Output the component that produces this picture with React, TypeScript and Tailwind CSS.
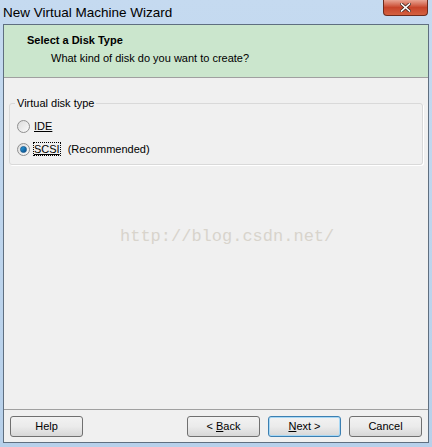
import React from 'react';

const body = { fontFamily: '"Liberation Sans", Arial, sans-serif' };

// Win7-style radio button
const Radio = ({ checked, u, rest }: { checked?: boolean; u: string; rest?: string }) => (
  <div className="flex items-center h-[13px]">
    <span className="relative w-[13px] h-[13px] rounded-full border border-[#8f8f8f] bg-gradient-to-br from-[#dcdcdc] to-[#fafafa] flex items-center justify-center">
      {checked && (
        <span className="w-[7px] h-[7px] rounded-full bg-gradient-to-br from-[#2aa6e8] to-[#0a4a86] border border-[#185a90]" />
      )}
    </span>
    <span className="ml-[4px] text-[11px] text-black">
      <span className={checked ? 'underline outline-1 outline-dotted outline-black' : 'underline'}>{u}</span>
      {rest && <span className="ml-[8px]">{rest}</span>}
    </span>
  </div>
);

const Btn = ({ children, focus }: { children: React.ReactNode; focus?: boolean }) => (
  <button
    className={`w-[73px] h-[21px] rounded-[3px] border text-[11px] text-black bg-gradient-to-b from-[#f2f2f2] via-[#ebebeb] to-[#d7d7d7] ${
      focus ? 'border-[#3c7fb1] shadow-[inset_0_0_0_1px_#a8d8f5]' : 'border-[#707070]'
    }`}
  >
    {children}
  </button>
);

export default function App() {
  return (
    <div className="w-[432px] h-[447px] bg-gradient-to-b from-[#c5daf0] to-[#b7d0ea] flex flex-col" style={body}>
      {/* title bar */}
      <div className="h-[24px] flex items-start justify-between">
        <span className="pl-[3px] pt-[3px] text-[13.5px] text-black">New Virtual Machine Wizard</span>
        <div className="mr-[4px] w-[45px] h-[16px] rounded-b-[4px] border border-t-0 border-[#6d2b1d] bg-gradient-to-b from-[#e8a493] via-[#c7442a] to-[#d4603f] flex items-center justify-center">
          <svg width="11" height="9" viewBox="0 0 11 9">
            <path d="M1.5 1 L9.5 8 M9.5 1 L1.5 8" stroke="#4a2a22" strokeWidth="3.2" strokeLinecap="square" />
            <path d="M1.5 1 L9.5 8 M9.5 1 L1.5 8" stroke="#ffffff" strokeWidth="1.6" strokeLinecap="square" />
          </svg>
        </div>
      </div>

      {/* client area */}
      <div className="flex-1 mx-[3px] mb-[4px] border border-[#5f6f80] bg-[#f0f0f0] flex flex-col">
        <div className="h-[53px] bg-[#cbe6cd] border-b border-[#a0a0a0] pl-[23px] pt-[7px]">
          <div className="text-[11px] font-bold text-black">Select a Disk Type</div>
          <div className="text-[11px] text-black pl-[24px] mt-[1px]">What kind of disk do you want to create?</div>
        </div>

        <div className="flex-1 px-[5px] pt-[17px] relative">
          <fieldset className="border border-[#d9d9d9] shadow-[1px_1px_0_#ffffff] rounded-[3px] h-[70px] px-[7px] pt-[4px]">
            <legend className="text-[11px] text-black px-[2px] -ml-[2px]">Virtual disk type</legend>
            <div className="flex flex-col gap-[10px] mt-[4px]">
              <Radio u="IDE" />
              <Radio checked u="SCSI" rest="(Recommended)" />
            </div>
          </fieldset>
          <div
            className="absolute left-[116px] top-[146px] text-[17px] text-[#d8d4cc]"
            style={{ fontFamily: '"Liberation Mono", "DejaVu Sans Mono", monospace' }}
          >
            http://blog.csdn.net/
          </div>
        </div>

        <div className="border-t border-[#a0a0a0] h-[33px] flex items-center px-[6px]">
          <Btn>Help</Btn>
          <div className="flex-1" />
          <div className="flex gap-[8px]">
            <Btn>
              &lt; <span className="underline">B</span>ack
            </Btn>
            <Btn focus>
              <span className="underline">N</span>ext &gt;
            </Btn>
            <Btn>Cancel</Btn>
          </div>
        </div>
      </div>
    </div>
  );
}
